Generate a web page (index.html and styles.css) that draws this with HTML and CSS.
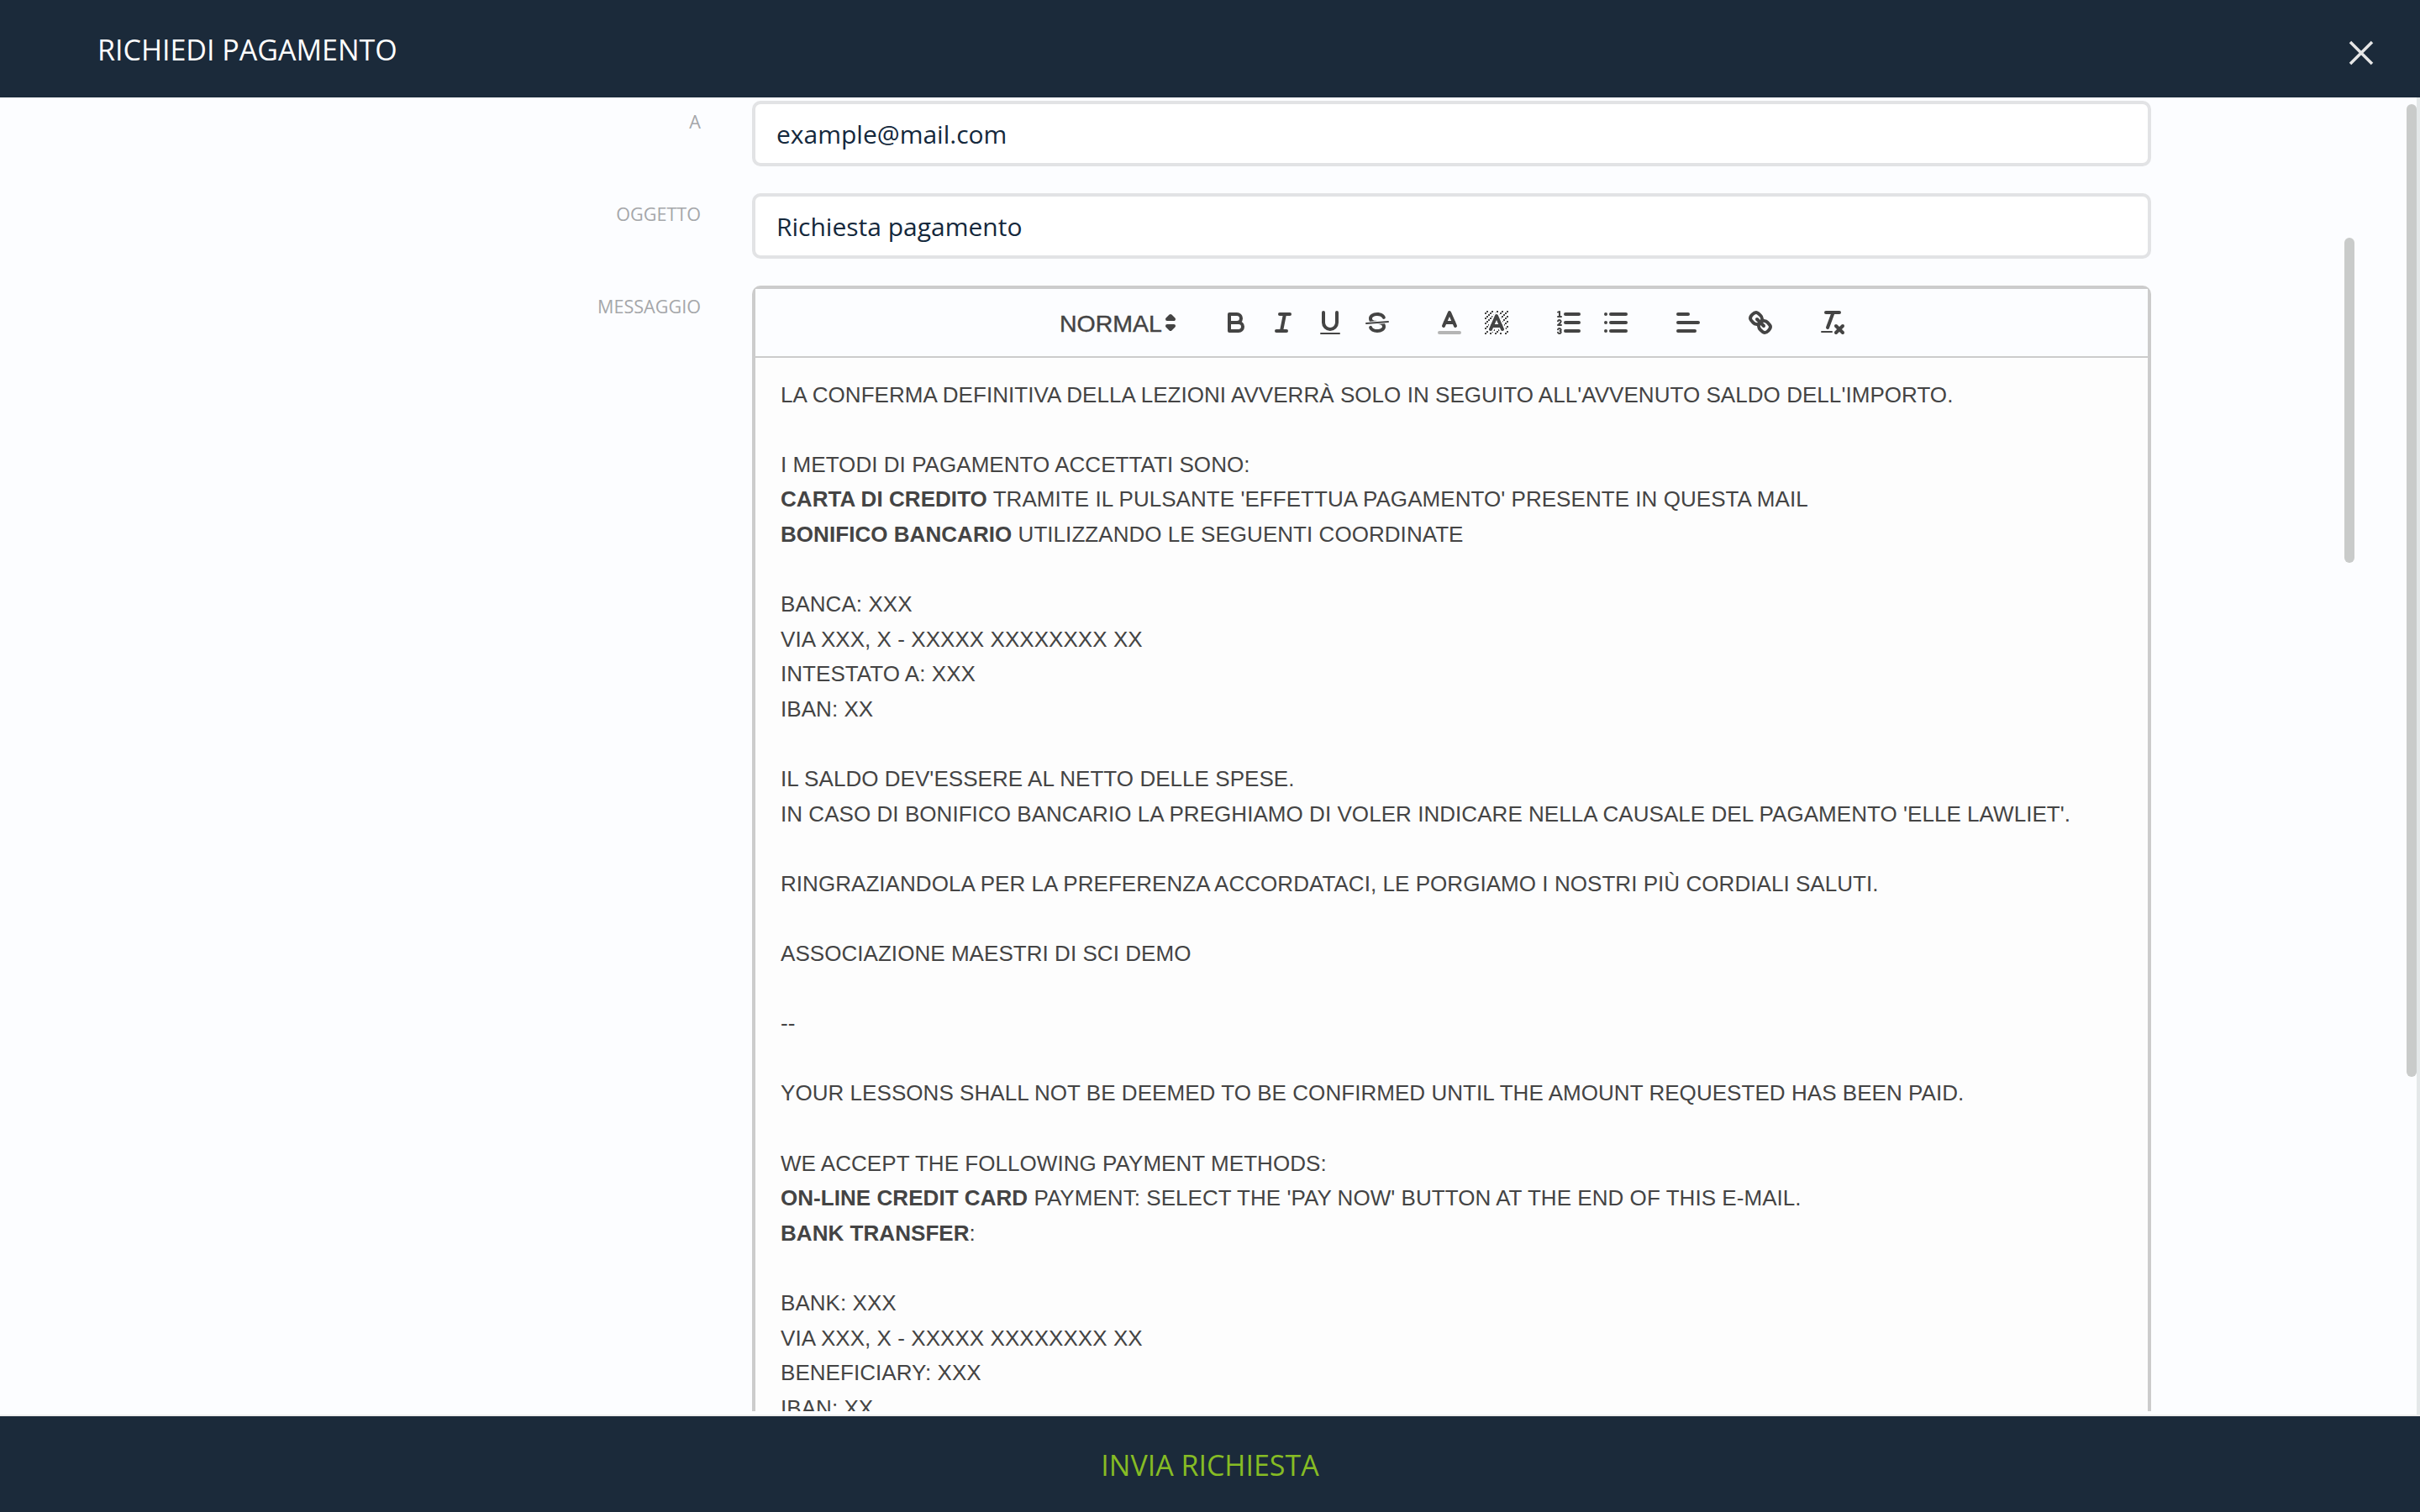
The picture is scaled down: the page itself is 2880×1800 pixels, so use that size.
FILE: index.html
```html
<!DOCTYPE html>
<html lang="it">
<head>
<meta charset="utf-8">
<title>Richiedi pagamento</title>
<link rel="stylesheet" href="styles.css">
</head>
<body>
<header class="top">
  <h1 class="title">RICHIEDI PAGAMENTO</h1>
  <svg class="close" viewBox="0 0 28 28"><path d="M1 1 27 27M27 1 1 27"/></svg>
</header>
<main class="main">
  <div class="form">
    <div class="row">
      <label class="label">A</label>
      <div class="input">example@mail.com</div>
    </div>
    <div class="row">
      <label class="label">OGGETTO</label>
      <div class="input">Richiesta pagamento</div>
    </div>
    <div class="row">
      <label class="label">MESSAGGIO</label>
      <div class="editor">
        <div class="toolbar">
          <span class="picker">NORMAL<svg class="ico" viewBox="0 0 18 18"><polygon class="s" points="7 11 9 13 11 11 7 11"/><polygon class="s" points="7 7 9 5 11 7 7 7"/></svg></span>
          <span class="group">
            <span class="btn"><svg class="ico" viewBox="0 0 18 18"><path class="s" d="M5,4H9.5A2.5,2.5,0,0,1,12,6.5v0A2.5,2.5,0,0,1,9.5,9H5A0,0,0,0,1,5,9V4A0,0,0,0,1,5,4Z"/><path class="s" d="M5,9h5.5A2.5,2.5,0,0,1,13,11.5v0A2.5,2.5,0,0,1,10.5,14H5a0,0,0,0,1,0,0V9A0,0,0,0,1,5,9Z"/></svg></span>
            <span class="btn"><svg class="ico" viewBox="0 0 18 18"><line class="s" x1="7" x2="13" y1="4" y2="4"/><line class="s" x1="5" x2="11" y1="14" y2="14"/><line class="s" x1="8" x2="10" y1="14" y2="4"/></svg></span>
            <span class="btn"><svg class="ico" viewBox="0 0 18 18"><path class="s" d="M5,3V9a4.012,4.012,0,0,0,4,4H9a4.012,4.012,0,0,0,4-4V3"/><rect class="f" height="1" rx="0.5" ry="0.5" width="12" x="3" y="15"/></svg></span>
            <span class="btn"><svg class="ico" viewBox="0 0 18 18"><line class="s thin" x1="15.5" x2="2.5" y1="8.5" y2="9.5"/><path class="f" d="M9.007,8C6.542,7.791,6,7.519,6,6.5,6,5.792,7.283,5,9,5c1.571,0,2.765.679,2.969,1.309a1,1,0,0,0,1.9-.617C13.356,4.106,11.354,3,9,3,6.2,3,4,4.538,4,6.5a3.2,3.2,0,0,0,.5,1.843Z"/><path class="f" d="M8.984,10C11.457,10.208,12,10.479,12,11.5c0,.708-1.283,1.5-3,1.5-1.571,0-2.765-.679-2.969-1.309a1,1,0,1,0-1.9.617C4.644,13.894,6.646,15,9,15c2.8,0,5-1.538,5-3.5a3.2,3.2,0,0,0-.5-1.843Z"/></svg></span>
          </span>
          <span class="group">
            <span class="btn"><svg class="ico" viewBox="0 0 18 18"><line class="s label-line" x1="3" x2="15" y1="15" y2="15"/><polyline class="s" points="5.5 11 9 3 12.5 11"/><line class="s" x1="11.63" x2="6.38" y1="9" y2="9"/></svg></span>
            <span class="btn"><svg class="ico" viewBox="0 0 18 18"><g class="f"><polygon points="6 6.868 6 6 5 6 5 7 5.942 7 6 6.868"/><rect height="1" width="1" x="4" y="4"/><polygon points="6.817 5 6 5 6 6 6.38 6 6.817 5"/><rect height="1" width="1" x="2" y="6"/><rect height="1" width="1" x="3" y="5"/><rect height="1" width="1" x="4" y="7"/><polygon points="4 11.439 4 11 3 11 3 12 3.755 12 4 11.439"/><rect height="1" width="1" x="2" y="12"/><rect height="1" width="1" x="2" y="9"/><rect height="1" width="1" x="2" y="15"/><polygon points="4.63 10 4 10 4 11 4.192 11 4.63 10"/><rect height="1" width="1" x="3" y="8"/><path d="M10.832,4.2L11,4.582V4H10.708A1.948,1.948,0,0,1,10.832,4.2Z"/><path d="M7,4.582L7.168,4.2A1.929,1.929,0,0,1,7.292,4H7V4.582Z"/><path d="M8,13H7.683l-0.351.8a1.933,1.933,0,0,1-.124.2H8V13Z"/><rect height="1" width="1" x="12" y="2"/><rect height="1" width="1" x="11" y="3"/><path d="M9,3H8V3.282A1.985,1.985,0,0,1,9,3Z"/><rect height="1" width="1" x="2" y="3"/><rect height="1" width="1" x="6" y="2"/><rect height="1" width="1" x="3" y="2"/><rect height="1" width="1" x="5" y="3"/><rect height="1" width="1" x="9" y="2"/><rect height="1" width="1" x="15" y="14"/><polygon points="13.447 10.174 13.469 10.225 13.472 10.232 13.808 11 14 11 14 10 13.37 10 13.447 10.174"/><rect height="1" width="1" x="13" y="7"/><rect height="1" width="1" x="15" y="5"/><rect height="1" width="1" x="14" y="6"/><rect height="1" width="1" x="15" y="8"/><rect height="1" width="1" x="14" y="9"/><path d="M3.775,14H3v1H4V14.314A1.97,1.97,0,0,1,3.775,14Z"/><rect height="1" width="1" x="14" y="3"/><polygon points="12 6.868 12 6 11.62 6 12 6.868"/><rect height="1" width="1" x="15" y="2"/><rect height="1" width="1" x="12" y="5"/><rect height="1" width="1" x="13" y="4"/><polygon points="12.933 9 13 9 13 8 12.495 8 12.933 9"/><rect height="1" width="1" x="9" y="14"/><rect height="1" width="1" x="8" y="15"/><path d="M6,14.926V15H7V14.316A1.993,1.993,0,0,1,6,14.926Z"/><rect height="1" width="1" x="5" y="15"/><path d="M10.668,13.8L10.317,13H10v1h0.792A1.947,1.947,0,0,1,10.668,13.8Z"/><rect height="1" width="1" x="11" y="15"/><path d="M14.332,12.2a1.99,1.99,0,0,1,.166.8H15V12H14.245Z"/><rect height="1" width="1" x="14" y="15"/><rect height="1" width="1" x="15" y="11"/></g><polyline class="s" points="5.5 13 9 5 12.5 13"/><line class="s" x1="11.63" x2="6.38" y1="11" y2="11"/></svg></span>
          </span>
          <span class="group">
            <span class="btn"><svg class="ico" viewBox="0 0 18 18"><line class="s" x1="7" x2="15" y1="4" y2="4"/><line class="s" x1="7" x2="15" y1="9" y2="9"/><line class="s" x1="7" x2="15" y1="14" y2="14"/><line class="s thin" x1="2.5" x2="4.5" y1="5.5" y2="5.5"/><path class="f" d="M3.5,6A0.5,0.5,0,0,1,3,5.5V3.085l-0.276.138A0.5,0.5,0,0,1,2.053,3c-0.124-.247-0.023-0.324.224-0.447l1-.5A0.5,0.5,0,0,1,4,2.5v3A0.5,0.5,0,0,1,3.5,6Z"/><path class="s thin" d="M4.5,10.5h-2c0-.234,1.85-1.076,1.85-2.234A0.959,0.959,0,0,0,2.5,8.156"/><path class="s thin" d="M2.5,14.846a0.959,0.959,0,0,0,1.85-.109A0.7,0.7,0,0,0,3.75,14a0.688,0.688,0,0,0,.6-0.736,0.959,0.959,0,0,0-1.85-.109"/></svg></span>
            <span class="btn"><svg class="ico" viewBox="0 0 18 18"><line class="s" x1="6" x2="15" y1="4" y2="4"/><line class="s" x1="6" x2="15" y1="9" y2="9"/><line class="s" x1="6" x2="15" y1="14" y2="14"/><line class="s" x1="3" x2="3" y1="4" y2="4"/><line class="s" x1="3" x2="3" y1="9" y2="9"/><line class="s" x1="3" x2="3" y1="14" y2="14"/></svg></span>
          </span>
          <span class="group">
            <span class="btn"><svg class="ico" viewBox="0 0 18 18"><line class="s" x1="3" x2="15" y1="9" y2="9"/><line class="s" x1="3" x2="13" y1="14" y2="14"/><line class="s" x1="3" x2="9" y1="4" y2="4"/></svg></span>
          </span>
          <span class="group">
            <span class="btn"><svg class="ico" viewBox="0 0 18 18"><line class="s" x1="7" x2="11" y1="7" y2="11"/><path class="s" d="M8.9,4.577a3.476,3.476,0,0,1,.36,4.679A3.476,3.476,0,0,1,4.577,8.9C3.185,7.5,2.035,6.4,4.217,4.217S7.5,3.185,8.9,4.577Z"/><path class="s" d="M13.423,9.1a3.476,3.476,0,0,0-4.679-.36,3.476,3.476,0,0,0,.36,4.679c1.392,1.392,2.5,2.542,4.679.36S14.815,10.5,13.423,9.1Z"/></svg></span>
          </span>
          <span class="group">
            <span class="btn"><svg class="ico" viewBox="0 0 18 18"><line class="s" x1="5" x2="13" y1="3" y2="3"/><line class="s" x1="6" x2="9.35" y1="12" y2="3"/><line class="s" x1="11" x2="15" y1="11" y2="15"/><line class="s" x1="15" x2="11" y1="11" y2="15"/><rect class="f" height="1" rx="0.5" ry="0.5" width="7" x="2" y="14"/></svg></span>
          </span>
        </div>
        <div class="content">
          <p>LA CONFERMA DEFINITIVA DELLA LEZIONI AVVERRÀ SOLO IN SEGUITO ALL'AVVENUTO SALDO DELL'IMPORTO.</p>
          <p><br></p>
          <p>I METODI DI PAGAMENTO ACCETTATI SONO:</p>
          <p><strong>CARTA DI CREDITO</strong> TRAMITE IL PULSANTE 'EFFETTUA PAGAMENTO' PRESENTE IN QUESTA MAIL</p>
          <p><strong>BONIFICO BANCARIO</strong> UTILIZZANDO LE SEGUENTI COORDINATE</p>
          <p><br></p>
          <p>BANCA: XXX</p>
          <p>VIA XXX, X - XXXXX XXXXXXXX XX</p>
          <p>INTESTATO A: XXX</p>
          <p>IBAN: XX</p>
          <p><br></p>
          <p>IL SALDO DEV'ESSERE AL NETTO DELLE SPESE.</p>
          <p>IN CASO DI BONIFICO BANCARIO LA PREGHIAMO DI VOLER INDICARE NELLA CAUSALE DEL PAGAMENTO 'ELLE LAWLIET'.</p>
          <p><br></p>
          <p>RINGRAZIANDOLA PER LA PREFERENZA ACCORDATACI, LE PORGIAMO I NOSTRI PIÙ CORDIALI SALUTI.</p>
          <p><br></p>
          <p>ASSOCIAZIONE MAESTRI DI SCI DEMO</p>
          <p><br></p>
          <p>--</p>
          <p><br></p>
          <p>YOUR LESSONS SHALL NOT BE DEEMED TO BE CONFIRMED UNTIL THE AMOUNT REQUESTED HAS BEEN PAID.</p>
          <p><br></p>
          <p>WE ACCEPT THE FOLLOWING PAYMENT METHODS:</p>
          <p><strong>ON-LINE CREDIT CARD</strong> PAYMENT: SELECT THE 'PAY NOW' BUTTON AT THE END OF THIS E-MAIL.</p>
          <p><strong>BANK TRANSFER</strong>:</p>
          <p><br></p>
          <p>BANK: XXX</p>
          <p>VIA XXX, X - XXXXX XXXXXXXX XX</p>
          <p>BENEFICIARY: XXX</p>
          <p>IBAN: XX</p>
        </div>
      </div>
    </div>
  </div>
  <div class="inner-thumb"></div>
  <div class="track"><div class="thumb"></div></div>
</main>
<footer class="bottom">
  <span class="send">INVIA RICHIESTA</span>
</footer>
</body>
</html>
```

FILE: styles.css
```css
* { box-sizing: border-box; }
html, body { height: 100%; }
body {
  margin: 0;
  height: 1800px;
  display: flex;
  flex-direction: column;
  overflow: hidden;
  background: #fcfdff;
  font-family: "Open Sans", sans-serif;
}
.top {
  flex: 0 0 116px;
  background: #1b2a3a;
  display: flex;
  align-items: flex-start;
  justify-content: space-between;
  padding: 36px 56px 0 116px;
}
.title {
  margin: 0;
  font-size: 34px;
  line-height: 46px;
  font-weight: 400;
  color: #fff;
}
.close {
  width: 28px;
  height: 28px;
  margin-top: 13px;
  overflow: visible;
}
.close path { fill: none; stroke: #e6e6e6; stroke-width: 3.5; }
.main {
  position: relative;
  flex: 0 0 1570px;
  height: 1570px;
  padding: 4px 0;
  border-bottom: 2px solid #eee;
  background: #fcfdff;
}
.form {
  height: 100%;
  overflow: hidden;
  display: flex;
  flex-direction: column;
  gap: 32px;
}
.row {
  display: grid;
  grid-template-columns: 834px 1665px;
  column-gap: 61px;
  align-items: start;
}
.label {
  text-align: right;
  font-size: 21.6px;
  line-height: 32px;
  padding-top: 9px;
  font-weight: 400;
  color: #a5a7aa;
}
.input {
  height: 78px;
  border: 4px solid #e2e3e5;
  border-radius: 10px;
  background: #fff;
  padding-left: 25px;
  font-size: 30px;
  line-height: 71px;
  color: #14283c;
}
.editor {
  border: 4px solid #ccc;
  border-bottom: 0;
  border-radius: 10px 10px 0 0;
  background: #fdfdfd;
}
.toolbar {
  height: 82px;
  padding: 0 0 0 346px;
  display: flex;
  align-items: center;
  border-bottom: 2px solid #ccc;
  background: #fcfdff;
}
.picker {
  width: 168px;
  height: 48px;
  padding: 2px 0 0 16px;
  display: flex;
  align-items: center;
  position: relative;
  font-family: "Liberation Sans", Arial, sans-serif;
  font-size: 28.5px;
  color: #444;
  -webkit-text-stroke: 0.4px #444;
}
.picker .ico { position: absolute; right: 2px; top: 6px; }
.group { display: flex; margin-left: 30px; }
.btn { width: 56px; height: 48px; padding: 6px 10px; display: block; }
.ico { width: 36px; height: 36px; display: block; }
.s {
  fill: none;
  stroke: #444;
  stroke-width: 2;
  stroke-linecap: round;
  stroke-linejoin: round;
}
.thin { stroke-width: 1; }
.f { fill: #444; }
.label-line { stroke: #b5b5b5; }
.content {
  padding: 23.6px 30px 0;
  font-family: "Liberation Sans", Arial, sans-serif;
  font-size: 26px;
  line-height: 41.6px;
  letter-spacing: 0.05px;
  color: #444;
}
.content p { margin: 0; }
.content strong { font-weight: 700; }
.inner-thumb {
  position: absolute;
  left: 2790px;
  top: 167px;
  width: 12px;
  height: 387px;
  border-radius: 6px;
  background: #c9cbca;
}
.track {
  position: absolute;
  top: 0;
  right: 0;
  bottom: 0;
  width: 16px;
  border-right: 4px solid #e4e8e9;
  padding-top: 8px;
}
.thumb {
  width: 12px;
  height: 1158px;
  border-radius: 6px;
  background: #c9cbca;
}
.bottom {
  flex: 0 0 114px;
  padding-top: 2px;
  background: #1b2a3a;
  display: flex;
  align-items: center;
  justify-content: center;
}
.send {
  font-size: 34px;
  font-weight: 400;
  color: #86bc24;
}
```
